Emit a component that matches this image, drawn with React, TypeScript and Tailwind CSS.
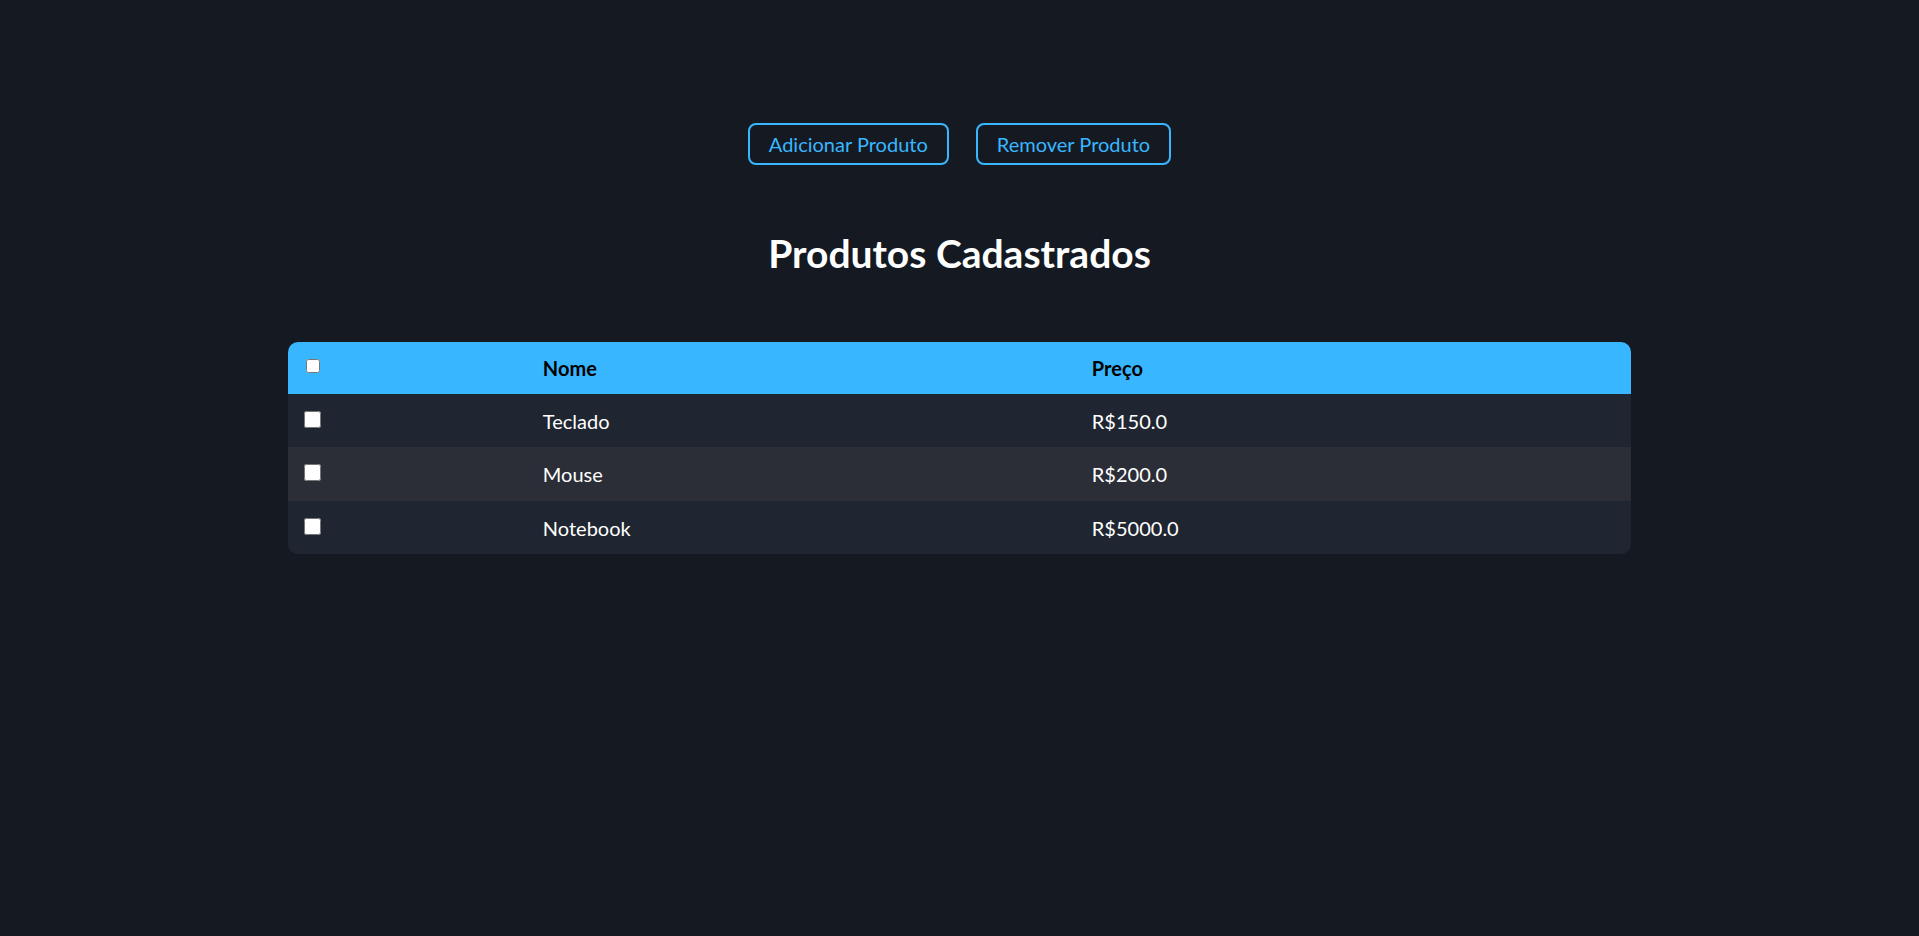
import { useState } from "react";

type Produto = { id: number; nome: string; preco: number };

const produtos: Produto[] = [
  { id: 1, nome: "Teclado", preco: 150 },
  { id: 2, nome: "Mouse", preco: 200 },
  { id: 3, nome: "Notebook", preco: 5000 },
];

function App() {
  const [selecionados, setSelecionados] = useState<number[]>([]);

  function toggle(id: number) {
    setSelecionados((s) =>
      s.includes(id) ? s.filter((x) => x !== id) : [...s, id]
    );
  }

  function toggleTodos() {
    setSelecionados((s) =>
      s.length === produtos.length ? [] : produtos.map((p) => p.id)
    );
  }

  return (
    <div
      className="min-h-screen bg-[#151a22] text-white flex flex-col items-center pt-[123px]"
      style={{ fontFamily: "Lato, 'Noto Sans', sans-serif" }}
    >
      <div className="flex gap-[27px]">
        <button className="h-[42px] px-[19px] border-2 border-[#38b6ff] rounded-lg text-[#38b6ff] text-[20px]">
          Adicionar Produto
        </button>
        <button className="h-[42px] px-[19px] border-2 border-[#38b6ff] rounded-lg text-[#38b6ff] text-[20px]">
          Remover Produto
        </button>
      </div>

      <h2 className="mt-[66px] text-[39px] leading-[44px] font-bold">
        Produtos Cadastrados
      </h2>

      <div className="mt-[67px] w-[70%] rounded-[10px] overflow-hidden">
        <table className="w-full border-collapse text-left text-[20px]">
          <thead>
            <tr className="bg-[#38b6ff] text-black h-[52px]">
              <th className="w-[239px] pl-[18px] pr-4 font-normal">
                <input
                  type="checkbox"
                  className="w-[14px] h-[14px] align-[3px]"
                  checked={selecionados.length === produtos.length}
                  onChange={toggleTodos}
                />
              </th>
              <th className="w-[549px] px-4 font-bold">Nome</th>
              <th className="px-4 font-bold">Preço</th>
            </tr>
          </thead>
          <tbody>
            {produtos.map((p, i) => (
              <tr
                key={p.id}
                className={
                  i % 2 === 1 ? "bg-[#2b2e37] h-[54px]" : "bg-[#202631] h-[53px]"
                }
              >
                <td className="pl-[16px] pr-4">
                  <input
                    type="checkbox"
                    className="w-[17px] h-[17px] align-[1px]"
                    checked={selecionados.includes(p.id)}
                    onChange={() => toggle(p.id)}
                  />
                </td>
                <td className="px-4">{p.nome}</td>
                <td className="px-4">R${p.preco.toFixed(1)}</td>
              </tr>
            ))}
          </tbody>
        </table>
      </div>
    </div>
  );
}

export default App;
